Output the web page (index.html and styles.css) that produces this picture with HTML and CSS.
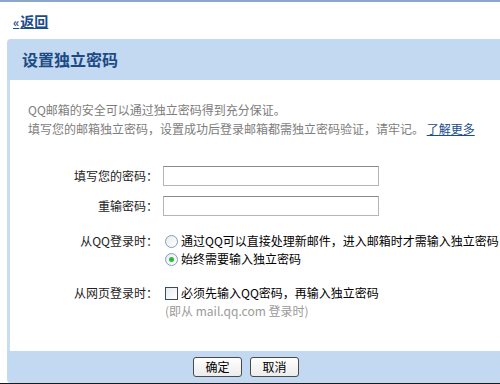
FILE: index.html
```html
<!DOCTYPE html>
<html lang="zh-CN">
<head>
<meta charset="utf-8"/>
<title>设置独立密码</title>
<link rel="stylesheet" href="styles.css">
</head>
<body>
<div class="back"><a href="#"><span class="arr">«</span>返回</a></div>
<div class="panel">
	<div class="panel-head">设置独立密码</div>
	<div class="panel-body">
		<p class="intro">QQ邮箱的安全可以通过独立密码得到充分保证。<br>填写您的邮箱独立密码，设置成功后登录邮箱都需独立密码验证，请牢记。 <a href="#">了解更多</a></p>
		<form class="pwd-form">
			<div class="row">
				<label class="label" for="pwd">填写您的密码：</label>
				<input class="text" id="pwd" type="password">
			</div>
			<div class="row">
				<label class="label" for="pwd2">重输密码：</label>
				<input class="text" id="pwd2" type="password">
			</div>
			<div class="row row-opt">
				<span class="label">从QQ登录时：</span>
				<div class="opts">
					<label><input class="radio" type="radio" name="qq">通过QQ可以直接处理新邮件，进入邮箱时才需输入独立密码</label>
					<label><input class="radio" type="radio" name="qq" checked>始终需要输入独立密码</label>
				</div>
			</div>
			<div class="row row-opt">
				<span class="label">从网页登录时：</span>
				<div class="opts">
					<label><input class="check" type="checkbox">必须先输入QQ密码，再输入独立密码</label>
					<span class="note">(即从 mail.qq.com 登录时)</span>
				</div>
			</div>
		</form>
	</div>
	<div class="panel-foot">
		<button class="btn">确定</button><button class="btn">取消</button>
	</div>
</div>
<div class="edge"></div>
</body>
</html>
```

FILE: styles.css
```css
html, body {
	margin:0;
	overflow:hidden;
}
body {
	background:#fff;
	border-top:2px solid #8da7ca;
	font:400 12px/18px "Noto Sans CJK SC", "Liberation Sans", sans-serif;
	color:#000;
}
a {
	color:#1b4c8c;
}
.back {
	height:37px;
	padding-left:13px;
	box-sizing:border-box;
	padding-top:10px;
	font-size:14px;
	line-height:18px;
	font-weight:700;
}
.back .arr {
	font-size:12px;
	margin-right:1px;
}
.panel {
	margin-left:7px;
}
.panel-head {
	height:41px;
	line-height:41px;
	padding-left:15px;
	background:#c3d9f1;
	border-radius:4px 0 0 0;
	color:#1d4a85;
	font-size:16px;
	font-weight:700;
}
.panel-body {
	border-left:3px solid #c8dcf2;
	padding:20px 0 31px;
}
.intro {
	margin:0 0 0 18px;
	line-height:19px;
	color:#7d7d7d;
}
.intro a {
	color:#1b4c8c;
}
.pwd-form {
	margin-top:28px;
}
.row {
	display:flex;
	align-items:flex-start;
	margin-top:10px;
}
.row:first-child {
	margin-top:0;
}
.label {
	width:148px;
	margin-right:5px;
	text-align:right;
	line-height:20px;
	color:#222;
}
.text {
	width:216px;
	height:20px;
	box-sizing:border-box;
	margin:0;
	padding:1px 3px;
	border:1px solid #b5b5b5;
	border-top-color:#8a8a8a;
	font:inherit;
}
.row-opt {
	margin-top:16px;
}
.row-opt .label {
	line-height:18px;
}
.opts {
	display:flex;
	flex-direction:column;
}
.opts label {
	display:flex;
	align-items:center;
	white-space:nowrap;
}
.radio, .check {
	appearance:none;
	-webkit-appearance:none;
	width:13px;
	height:13px;
	margin:0 3px 0 2px;
	box-sizing:border-box;
	background:linear-gradient(135deg, #e8ebee, #fff);
}
.radio {
	border:1px solid #7f9db9;
	border-radius:50%;
	display:grid;
	place-content:center;
}
.radio:checked::after {
	content:"";
	width:5px;
	height:5px;
	border-radius:50%;
	background:#2db83d;
}
.check {
	border:1px solid #3b4a5c;
}
.note {
	color:#9a9a9a;
	padding-left:2px;
}
.panel-foot {
	height:32px;
	box-sizing:border-box;
	padding:6px 0 0 186px;
	background:#c3d9f1;
	border-radius:0 0 0 4px;
}
.btn {
	width:49px;
	height:20px;
	margin:0 8px 0 0;
	padding:0;
	border:1px solid #4a4a4a;
	border-radius:3px;
	background:linear-gradient(#fff, #ececec);
	font:400 12px/18px "Noto Sans CJK SC", sans-serif;
	color:#000;
}
.edge {
	height:2px;
	background:#1a1a1a;
}
```
